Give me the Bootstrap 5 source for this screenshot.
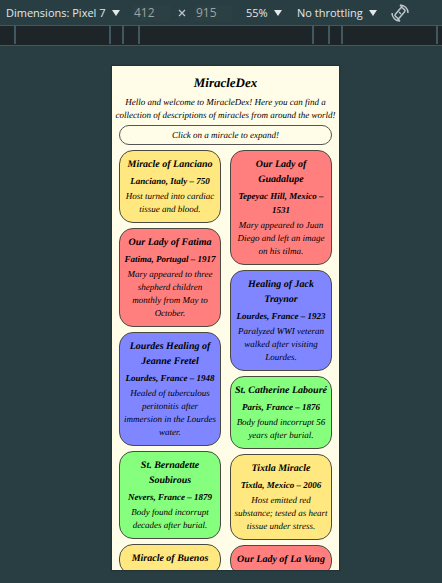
<!DOCTYPE html>
<html lang="en">
<head>
<meta charset="utf-8">
<meta name="viewport" content="width=device-width, initial-scale=1">
<title>MiracleDex</title>
<link rel="stylesheet" href="https://cdn.jsdelivr.net/npm/bootstrap@5.3.0/dist/css/bootstrap.min.css">
<style>
  body { background: #283e43; font-family: "Open Sans", "Noto Sans", sans-serif; }
  .toolbar { height: 25px; font-size: 11px; line-height: 16px; color: #e3e8e9; padding: 0 6px; }
  .toolbar select, .toolbar input { appearance: none; background: transparent; border: 0; color: inherit; padding: 0; font: inherit; font-size: 12px; }
  .toolbar select { font-size: 11px; }
  .toolbar input { width: 38px; color: #9ba4a6; background: #2c3f42; padding-left: 2px; }
  .pick { gap: 6px; }
  .pick svg { pointer-events: none; }
  .dims { margin: 0 14px 0 12px; gap: 8px; }
  .zoom-pick { margin-right: 15px; }
  .rotate { margin-left: 14px; color: #bcc6c8; }
  .ruler { height: 21px; background: #1d2528; border-top: 1px solid #40585e; border-bottom: 1px solid #40585e; padding-left: 9px; }
  .ruler span { border-left: 2px solid #40585e; margin-bottom: 1px; flex: none; }
  .seg-wide { width: 95px; }
  .seg-small { width: 13px; }
  .seg-medium { width: 16px; }
  .seg-phone { width: 174px; }
  .stage { padding: 20px 0 13px 9px; min-height: 0; }
  .device { width: 51.4%; min-width: 227px; background: #fffde7; color: #000; padding: 7px 7px 0; box-shadow: 0 0 1px 1px #233236; font-family: "Liberation Serif", serif; font-style: italic; text-align: center; font-size: 9px; line-height: 13px; text-rendering: geometricPrecision; }
  .device h1 { font-size: 13px; line-height: 20px; font-weight: 700; margin-bottom: 3px; }
  .intro { margin: 0 -5px; }
  .hint { border: 1px solid #555; border-radius: 10px; line-height: 18px; margin: 3px 0 5px; }
  .columns { gap: 9px; }
  .stack { flex: 1 1 0; min-width: 0; gap: 5px; }
  .miracle { border: 1px solid #4a4a42; border-radius: 14px; padding: 6px 3px; color: #000; font: inherit; text-rendering: inherit; }
  .miracle strong { display: block; font-size: 10px; line-height: 15px; margin-bottom: 2px; }
  .miracle b { display: block; line-height: 14px; margin-bottom: 2px; }
  .miracle span { display: block; }
  .gold { background: #ffe87f; }
  .rose { background: #ff7f7f; }
  .azure { background: #7f86ff; }
  .leaf { background: #86ff7f; }
</style>
</head>
<body class="vh-100 d-flex flex-column overflow-hidden">
<header class="toolbar d-flex align-items-center flex-shrink-0 text-nowrap">
  <div class="pick d-flex align-items-center">
    <select aria-label="Device"><option>Dimensions: Pixel 7</option></select>
    <svg width="8" height="6" viewBox="0 0 8 6" fill="currentColor"><path d="M0 0h8L4 6z"/></svg>
  </div>
  <div class="dims d-flex align-items-center">
    <input type="text" value="412" aria-label="Width">
    <svg width="8" height="8" viewBox="0 0 8 8" stroke="#bcc6c8" stroke-width="1.3"><path d="M1 1l6 6M7 1L1 7"/></svg>
    <input type="text" value="915" aria-label="Height">
  </div>
  <div class="pick zoom-pick d-flex align-items-center">
    <select aria-label="Zoom"><option>55%</option></select>
    <svg width="8" height="6" viewBox="0 0 8 6" fill="currentColor"><path d="M0 0h8L4 6z"/></svg>
  </div>
  <div class="pick d-flex align-items-center">
    <select aria-label="Throttling"><option>No throttling</option></select>
    <svg width="8" height="6" viewBox="0 0 8 6" fill="currentColor"><path d="M0 0h8L4 6z"/></svg>
  </div>
  <button type="button" class="rotate btn p-0 border-0 d-flex" aria-label="Rotate">
    <svg width="18" height="18" viewBox="0 0 18 18" fill="none" stroke="currentColor" stroke-width="1.5"><rect x="6.300" y="3.500" width="5.400" height="11" rx="1.500" transform="rotate(40 9 9)"/><path d="M9 1C13.500 1 17 4.500 17 9M9 17C4.500 17 1 13.500 1 9M9 1l2.500 2.500M9 17l-2.500-2.500"/><path d="M8 8l2 2" stroke-width="1.200"/></svg>
  </button>
</header>
<div class="ruler d-flex justify-content-center flex-shrink-0">
  <span class="seg-wide"></span><span class="seg-small"></span><span class="seg-medium"></span><span class="seg-phone"></span><span class="seg-medium"></span><span class="seg-small"></span><span class="seg-wide"></span><span></span>
</div>
<div class="stage d-flex justify-content-center flex-grow-1">
  <main class="device overflow-hidden">
    <h1>MiracleDex</h1>
    <p class="intro">Hello and welcome to MiracleDex! Here you can find a collection of descriptions of miracles from around the world!</p>
    <p class="hint">Click on a miracle to expand!</p>
    <div class="columns d-flex align-items-start">
      <div class="stack d-flex flex-column">
        <button type="button" class="miracle gold"><strong>Miracle of Lanciano</strong><b>Lanciano, Italy – 750</b><span>Host turned into cardiac tissue and blood.</span></button>
        <button type="button" class="miracle rose"><strong>Our Lady of Fatima</strong><b>Fatima, Portugal – 1917</b><span>Mary appeared to three shepherd children monthly from May to October.</span></button>
        <button type="button" class="miracle azure"><strong>Lourdes Healing of Jeanne Fretel</strong><b>Lourdes, France – 1948</b><span>Healed of tuberculous peritonitis after immersion in the Lourdes water.</span></button>
        <button type="button" class="miracle leaf"><strong>St. Bernadette Soubirous</strong><b>Nevers, France – 1879</b><span>Body found incorrupt decades after burial.</span></button>
        <button type="button" class="miracle gold"><strong>Miracle of Buenos</strong></button>
      </div>
      <div class="stack d-flex flex-column">
        <button type="button" class="miracle rose"><strong>Our Lady of Guadalupe</strong><b>Tepeyac Hill, Mexico – 1531</b><span>Mary appeared to Juan Diego and left an image on his tilma.</span></button>
        <button type="button" class="miracle azure"><strong>Healing of Jack Traynor</strong><b>Lourdes, France – 1923</b><span>Paralyzed WWI veteran walked after visiting Lourdes.</span></button>
        <button type="button" class="miracle leaf"><strong>St. Catherine Labouré</strong><b>Paris, France – 1876</b><span>Body found incorrupt 56 years after burial.</span></button>
        <button type="button" class="miracle gold"><strong>Tixtla Miracle</strong><b>Tixtla, Mexico – 2006</b><span>Host emitted red substance; tested as heart tissue under stress.</span></button>
        <button type="button" class="miracle rose"><strong>Our Lady of La Vang</strong></button>
      </div>
    </div>
  </main>
</div>
<script src="https://cdn.jsdelivr.net/npm/bootstrap@5.3.0/dist/js/bootstrap.bundle.min.js"></script>
</body>
</html>
